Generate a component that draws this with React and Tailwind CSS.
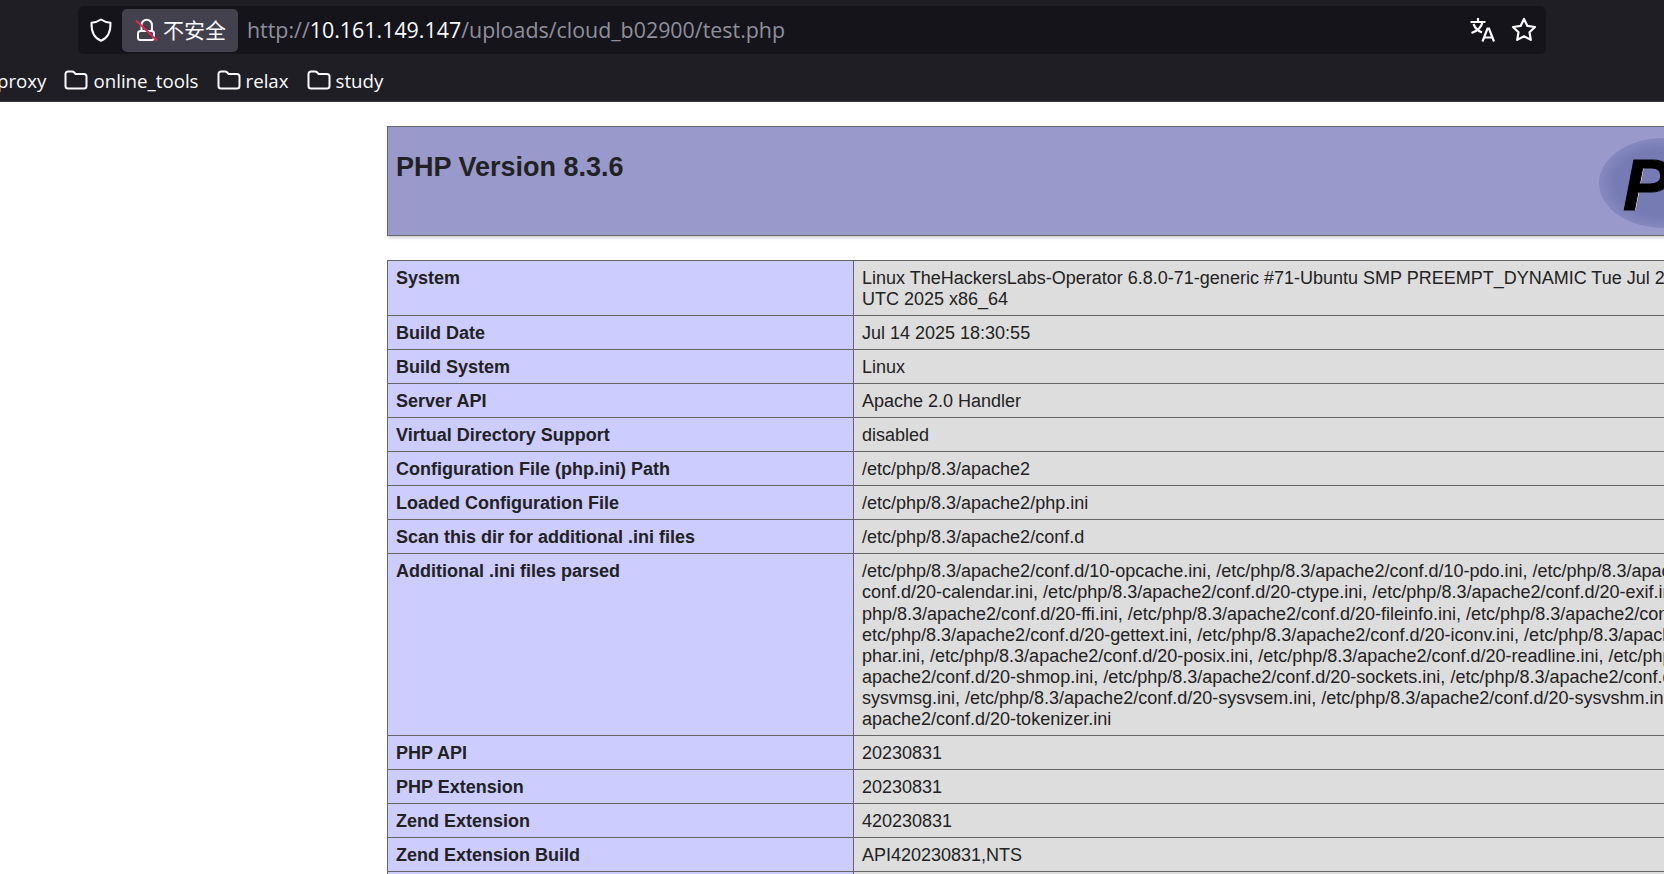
import React from 'react';

const SANS = "font-['Open_Sans','Noto_Sans_CJK_SC',sans-serif]";

const rows = [
  ['System', ['Linux TheHackersLabs-Operator 6.8.0-71-generic #71-Ubuntu SMP PREEMPT_DYNAMIC Tue Jul 22 16:52:38', 'UTC 2025 x86_64']],
  ['Build Date', ['Jul 14 2025 18:30:55']],
  ['Build System', ['Linux']],
  ['Server API', ['Apache 2.0 Handler']],
  ['Virtual Directory Support', ['disabled']],
  ['Configuration File (php.ini) Path', ['/etc/php/8.3/apache2']],
  ['Loaded Configuration File', ['/etc/php/8.3/apache2/php.ini']],
  ['Scan this dir for additional .ini files', ['/etc/php/8.3/apache2/conf.d']],
  ['Additional .ini files parsed', [
    '/etc/php/8.3/apache2/conf.d/10-opcache.ini, /etc/php/8.3/apache2/conf.d/10-pdo.ini, /etc/php/8.3/apache2/',
    'conf.d/20-calendar.ini, /etc/php/8.3/apache2/conf.d/20-ctype.ini, /etc/php/8.3/apache2/conf.d/20-exif.ini, /etc/',
    'php/8.3/apache2/conf.d/20-ffi.ini, /etc/php/8.3/apache2/conf.d/20-fileinfo.ini, /etc/php/8.3/apache2/conf.d/20-ftp.ini, /',
    'etc/php/8.3/apache2/conf.d/20-gettext.ini, /etc/php/8.3/apache2/conf.d/20-iconv.ini, /etc/php/8.3/apache2/conf.d/20-',
    'phar.ini, /etc/php/8.3/apache2/conf.d/20-posix.ini, /etc/php/8.3/apache2/conf.d/20-readline.ini, /etc/php/8.3/',
    'apache2/conf.d/20-shmop.ini, /etc/php/8.3/apache2/conf.d/20-sockets.ini, /etc/php/8.3/apache2/conf.d/20-',
    'sysvmsg.ini, /etc/php/8.3/apache2/conf.d/20-sysvsem.ini, /etc/php/8.3/apache2/conf.d/20-sysvshm.ini, /etc/php/8.3/',
    'apache2/conf.d/20-tokenizer.ini',
  ]],
  ['PHP API', ['20230831']],
  ['PHP Extension', ['20230831']],
  ['Zend Extension', ['420230831']],
  ['Zend Extension Build', ['API420230831,NTS']],
  ['PHP Extension Build', ['API20230831,NTS']],
];

function FolderIcon() {
  return (
    <svg width="24" height="20" viewBox="0 0 24 20" fill="none" stroke="#fbfbfe" strokeWidth="2" strokeLinejoin="round" className="shrink-0">
      <path d="M1.500 4a2.500 2.500 0 0 1 2.500-2.500h4.200c.7 0 1.300.3 1.800.8l1.600 1.700h8.400a2.500 2.500 0 0 1 2.500 2.500v9.500a2.500 2.500 0 0 1-2.500 2.500H4a2.500 2.500 0 0 1-2.500-2.500z" />
    </svg>
  );
}

function Bookmark({ label }) {
  return (
    <div className="flex items-center gap-[5px]">
      <FolderIcon />
      <span className="mt-[2px] text-[18.700px] text-[#fbfbfe]">{label}</span>
    </div>
  );
}

export default function App() {
  return (
    <div className="h-[874px] w-[1664px] overflow-hidden bg-white">
      {/* browser toolbar */}
      <div className={`h-[102px] bg-[#1e1e24] border-b border-[#38383d] ${SANS}`}>
        <div className="h-[60px] pt-[6px] pl-[78px]">
          <div className="flex h-[48px] w-[1468px] items-center rounded-[6px] bg-[#15141a] pl-[10px] pr-[8px]">
            <svg width="26" height="26" viewBox="0 0 26 26" fill="none" stroke="#fbfbfe" strokeWidth="2" strokeLinejoin="round" className="shrink-0">
              <path d="M13 2.500c2.800 2 6 3 9.500 3.200.2 8.500-1.700 15-9.500 18-7.800-3-9.700-9.500-9.500-18C7 5.500 10.200 4.500 13 2.500z" />
            </svg>
            <div className="ml-[8px] flex h-[43px] w-[116px] shrink-0 items-center rounded-[5px] bg-[#42414d] pl-[11px]">
              <svg width="26" height="26" viewBox="0 0 26 26" fill="none" className="shrink-0">
                <path d="M8.500 14V8a5.200 5.200 0 0 1 10.400 0v6" stroke="#fbfbfe" strokeWidth="2" />
                <rect x="5" y="14" width="16" height="9" rx="2.500" stroke="#fbfbfe" strokeWidth="2" />
                <path d="M3 3.500l21 20" stroke="#e22850" strokeWidth="2.200" />
              </svg>
              <span className="ml-[4px] text-[21px] text-[#fbfbfe] font-['Noto_Sans_CJK_SC',sans-serif]">不安全</span>
            </div>
            <div className="ml-[9px] flex-1 whitespace-nowrap text-[21.400px] text-[#8f8f9d]">
              http://<span className="text-[#fbfbfe]">10.161.149.147</span>/uploads/cloud_b02900/test.php
            </div>
            <svg width="28" height="28" viewBox="0 0 28 28" fill="none" stroke="#fbfbfe" strokeWidth="2.200" className="shrink-0">
              <path d="M2.500 6h15M10 2V6M14.500 6c-1 5-5 9-11 11M5.500 8c1.500 4 4.500 7 8.500 8.500" />
              <path d="M14.500 25.500l5-13h1.500l5 13M16.500 21.500h8" />
            </svg>
            <svg width="28" height="28" viewBox="0 0 28 28" fill="none" stroke="#fbfbfe" strokeWidth="2.200" strokeLinejoin="round" className="ml-[14px] shrink-0">
              <path d="M14 3l3.400 6.900 7.600 1.100-5.500 5.300 1.300 7.600-6.800-3.600-6.800 3.600 1.300-7.600L3 11l7.600-1.100z" />
            </svg>
          </div>
        </div>
        <div className="-ml-[3px] flex h-[41px] items-center gap-[18px] overflow-hidden">
          <span className="mt-[2px] text-[18.700px] text-[#fbfbfe]">proxy</span>
          <Bookmark label="online_tools" />
          <Bookmark label="relax" />
          <Bookmark label="study" />
        </div>
      </div>

      {/* phpinfo page */}
      <div className="w-[1326px] ml-[387px] pt-[24px] text-[18px] leading-[21.040px] text-[#222] font-['Liberation_Sans',sans-serif]">
        <div className="relative flex h-[110px] overflow-hidden border border-[#666] bg-[#9999cc] pl-[8px] pt-[21px] shadow-[1px_2px_3px_rgba(0,0,0,0.2)]">
          <h1 className="text-[27px] font-bold leading-[38px]">PHP Version 8.3.6</h1>
          <svg width="130" height="92" viewBox="0 0 130 92" className="absolute left-[1210px] top-[10px]">
            <defs>
              <radialGradient id="phpLogo" cx="50%" cy="50%" r="50%">
                <stop offset="0.75" stopColor="#777bb4" />
                <stop offset="1" stopColor="#8589bf" />
              </radialGradient>
            </defs>
            <ellipse cx="65" cy="46" rx="64" ry="45" fill="url(#phpLogo)" />
            <text x="26" y="73" fontSize="72" fontWeight="bold" fontStyle="italic" fontFamily="Liberation Sans" fill="#fff">P</text>
            <text x="25" y="73" fontSize="72" fontWeight="bold" fontStyle="italic" fontFamily="Liberation Sans" fill="#000" stroke="#000" strokeWidth="1">P</text>
          </svg>
        </div>
        <table className="mt-[24px] w-full table-fixed border-collapse border border-[#666]">
          <tbody>
            {rows.map(([name, lines]) => (
              <tr key={name}>
                <td className="w-[466px] border border-[#666] bg-[#ccccff] px-[8px] pt-[7px] pb-[5px] align-top font-bold">{name}</td>
                <td className="border border-[#666] bg-[#dddddd] px-[8px] pt-[7px] pb-[5px] align-top">
                  {lines.map((line) => (
                    <div key={line} className="whitespace-nowrap">{line}</div>
                  ))}
                </td>
              </tr>
            ))}
          </tbody>
        </table>
      </div>
    </div>
  );
}
